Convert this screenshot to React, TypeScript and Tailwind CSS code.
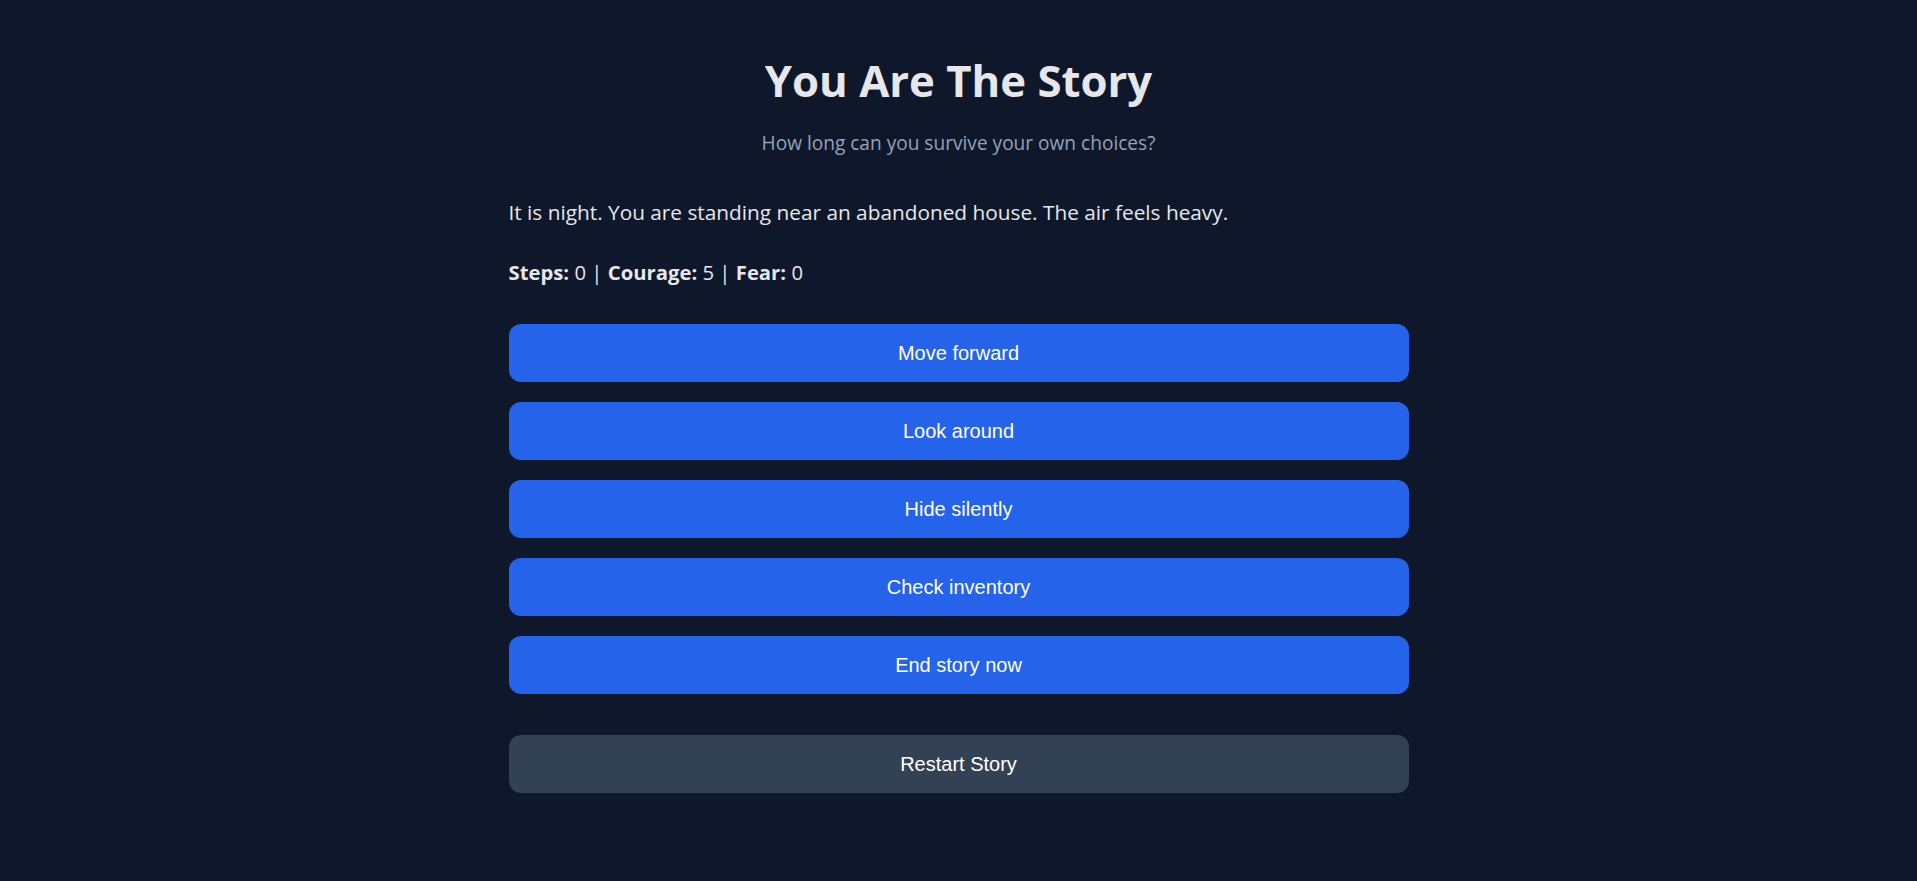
const choices = ["Move forward", "Look around", "Hide silently", "Check inventory", "End story now"];

const App = (): JSX.Element => {
  return (
    <div className="min-h-screen w-full bg-[#0f172a] text-[#e5e7eb] font-['Segoe_UI','Open_Sans',sans-serif]">
      <div className="mx-auto max-w-[900px] pt-[53px] pb-10">
        <h1 className="text-center text-[43.7px] leading-[54px] font-bold">You Are The Story</h1>
        <p className="mt-[22px] text-center text-[19.1px] leading-[28px] text-[#94a3b8]">
          How long can you survive your own choices?
        </p>

        <p className="mt-[41px] text-[20.8px] leading-[28px]">
          It is night. You are standing near an abandoned house. The air feels heavy.
        </p>
        <p className="mt-[32px] text-[20.3px] leading-[28px]">
          <b>Steps:</b> 0 | <b>Courage:</b> 5 | <b>Fear:</b> 0
        </p>

        <div className="mt-[38px] flex flex-col gap-[20px]">
          {choices.map((c) => (
            <button
              key={c}
              className="h-[58px] w-full rounded-[12px] bg-[#2563eb] text-[20px] text-white font-['Liberation_Sans',Arial,sans-serif]"
            >
              {c}
            </button>
          ))}
        </div>

        <button className="mt-[41px] h-[58px] w-full rounded-[12px] bg-[#334155] text-[20px] text-white font-['Liberation_Sans',Arial,sans-serif]">
          Restart Story
        </button>
      </div>
    </div>
  );
};

export default App;
